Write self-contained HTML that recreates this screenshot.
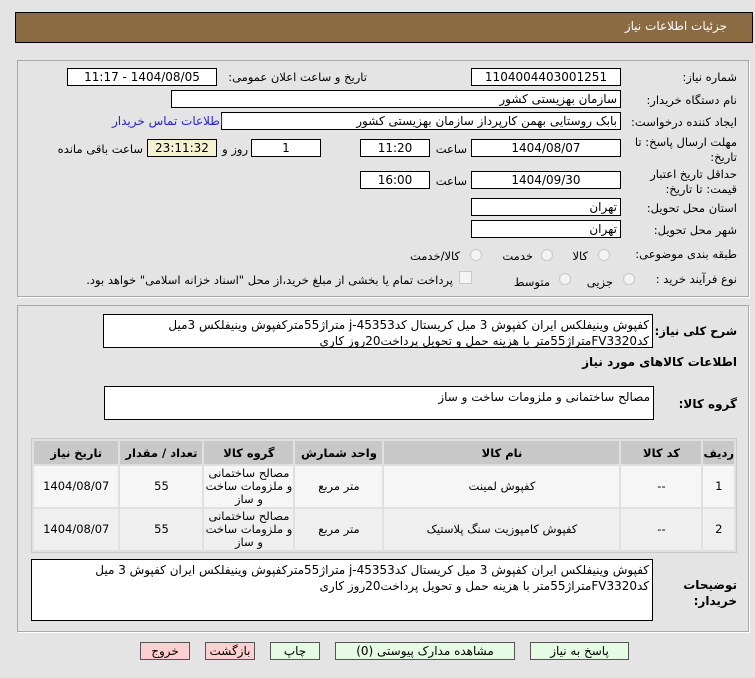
<!DOCTYPE html>
<html lang="fa" dir="rtl"><head><meta charset="utf-8">
<style>
*{box-sizing:border-box;margin:0;padding:0}
body{width:755px;height:678px;background:#e4e4e4;font-family:"DejaVu Sans","Noto Sans CJK SC",sans-serif;font-size:11.5px;color:#000;position:relative;overflow:hidden}
.a{position:absolute;white-space:nowrap}
.box{position:absolute;background:#fff;border:1px solid #000;height:18px;line-height:16px;font-size:12px}
.c{text-align:center}
.r{text-align:right;padding-right:3px}
.lab{position:absolute;white-space:nowrap;text-align:right}
.panel{position:absolute;border:1px solid #a8a8a8;border-right-color:#fff;border-bottom-color:#fff;box-shadow:inset -1px -1px 0 #a8a8a8}
.radio{position:absolute;width:12px;height:12px;border-radius:50%;border:1px solid #c8c8c8;background:#f4f4f4}
.ta{position:absolute;background:#fff;border:1px solid #000;font-size:12px;line-height:16px;padding:2px 3px;text-align:right}
table{position:absolute;border-collapse:separate;border-spacing:2px;background:#e0e0e0;border:1px solid #c8c8c8}
th{background:#c8c8c8;font-weight:bold;height:23px;font-size:11.5px}
td{text-align:center;font-size:11.5px;line-height:13px}
tr.o td{background:#f6f6f6}tr.e td{background:#efefef}
.btn{position:absolute;top:642px;height:18px;border:1px solid #555;font-size:12px;line-height:16px;text-align:center}
.g{background:#e6fbe3}.p{background:#fcd0d0}
</style></head><body>
<div class="a" style="left:15px;top:12px;width:738px;height:31px;background:#8b6b42;border:1px solid #000"></div>
<div class="a" style="right:28px;top:19px;color:#fff;font-size:12px">جزئیات اطلاعات نیاز</div>

<div class="panel" style="left:17px;top:60px;width:733px;height:238px"></div>
<div class="panel" style="left:17px;top:305px;width:733px;height:328px"></div>

<div class="lab" style="right:18px;top:70px">شماره نیاز:</div>
<div class="box c" style="left:471px;top:68px;width:150px">1104004403001251</div>
<div class="lab" style="right:388px;top:70px">تاریخ و ساعت اعلان عمومی:</div>
<div class="box c" style="left:67px;top:68px;width:150px">1404/08/05 - 11:17</div>

<div class="lab" style="right:18px;top:93px">نام دستگاه خریدار:</div>
<div class="box r" style="left:171px;top:90px;width:450px">سازمان بهزیستی کشور</div>

<div class="lab" style="right:18px;top:115px">ایجاد کننده درخواست:</div>
<div class="box r" style="left:221px;top:112px;width:400px">بابک  روستایی بهمن کارپرداز سازمان بهزیستی کشور</div>
<div class="a" style="left:112px;top:114px;color:#2323d8;font-size:12px">اطلاعات تماس خریدار</div>

<div class="lab" style="right:18px;top:135px;line-height:15px">مهلت ارسال پاسخ: تا<br>تاریخ:</div>
<div class="box c" style="left:471px;top:139px;width:150px">1404/08/07</div>
<div class="lab" style="right:288px;top:142px">ساعت</div>
<div class="box c" style="left:360px;top:139px;width:70px">11:20</div>
<div class="box c" style="left:251px;top:139px;width:70px">1</div>
<div class="lab" style="right:507px;top:142px">روز و</div>
<div class="box c" style="left:147px;top:139px;width:70px;background:#f5f2d4">23:11:32</div>
<div class="lab" style="right:612px;top:142px">ساعت باقی مانده</div>

<div class="lab" style="right:18px;top:167px;line-height:15px">حداقل تاریخ اعتبار<br>قیمت: تا تاریخ:</div>
<div class="box c" style="left:471px;top:171px;width:150px">1404/09/30</div>
<div class="lab" style="right:288px;top:174px">ساعت</div>
<div class="box c" style="left:360px;top:171px;width:70px">16:00</div>

<div class="lab" style="right:18px;top:201px">استان محل تحویل:</div>
<div class="box r" style="left:471px;top:198px;width:150px">تهران</div>
<div class="lab" style="right:18px;top:223px">شهر محل تحویل:</div>
<div class="box r" style="left:471px;top:220px;width:150px">تهران</div>

<div class="lab" style="right:18px;top:247px">طبقه بندی موضوعی:</div>
<div class="radio" style="left:598px;top:249px"></div><div class="lab" style="right:167px;top:249px">کالا</div>
<div class="radio" style="left:541px;top:249px"></div><div class="lab" style="right:222px;top:249px">خدمت</div>
<div class="radio" style="left:470px;top:249px"></div><div class="lab" style="right:295px;top:249px">کالا/خدمت</div>

<div class="lab" style="right:18px;top:272px">نوع فرآیند خرید :</div>
<div class="radio" style="left:623px;top:273px"></div><div class="lab" style="right:142px;top:275px">جزیی</div>
<div class="radio" style="left:559px;top:273px"></div><div class="lab" style="right:205px;top:275px">متوسط</div>
<div class="a" style="left:459px;top:271px;width:13px;height:13px;border:1px solid #c8c8c8;background:#f4f4f4"></div>
<div class="lab" style="right:302px;top:273px">پرداخت تمام یا بخشی از مبلغ خرید،از محل "اسناد خزانه اسلامی" خواهد بود.</div>

<div class="lab" style="right:18px;top:324px;font-weight:bold;font-size:11.5px">شرح کلی نیاز:</div>
<div class="ta" style="left:103px;top:314px;width:550px;height:34px">کفپوش وینیفلکس ایران کفپوش 3 میل کریستال کد45353-j  متراژ55مترکفپوش وینیفلکس 3میل کدFV3320متراژ55متر با هزینه حمل و تحویل پرداخت20روز کاری</div>
<div class="lab" style="right:18px;top:355px;font-weight:bold;font-size:12px">اطلاعات کالاهای مورد نیاز</div>

<div class="lab" style="right:18px;top:397px;font-weight:bold;font-size:12px">گروه کالا:</div>
<div class="ta" style="left:104px;top:386px;width:550px;height:34px">مصالح ساختمانی و ملزومات ساخت و ساز</div>

<table style="left:31px;top:438px;width:706px">
<tr><th style="width:27px">ردیف</th><th style="width:80px">کد کالا</th><th style="width:235px">نام کالا</th><th style="width:87px">واحد شمارش</th><th style="width:89px">گروه کالا</th><th style="width:82px">تعداد / مقدار</th><th>تاریخ نیاز</th></tr>
<tr class="o" style="height:41px"><td>1</td><td>--</td><td>کفپوش لمینت</td><td>متر مربع</td><td>مصالح ساختمانی و ملزومات ساخت و ساز</td><td>55</td><td>1404/08/07</td></tr>
<tr class="e" style="height:41px"><td>2</td><td>--</td><td>کفپوش کامپوزیت سنگ پلاستیک</td><td>متر مربع</td><td>مصالح ساختمانی و ملزومات ساخت و ساز</td><td>55</td><td>1404/08/07</td></tr>
</table>

<div class="lab" style="right:18px;top:577px;font-weight:bold;font-size:12px;line-height:16px">توضیحات<br>خریدار:</div>
<div class="ta" style="left:31px;top:559px;width:622px;height:62px">کفپوش وینیفلکس ایران کفپوش 3 میل کریستال کد45353-j  متراژ55مترکفپوش وینیفلکس ایران کفپوش 3 میل کدFV3320متراژ55متر با هزینه حمل و تحویل پرداخت20روز کاری</div>

<div class="btn g" style="left:530px;width:99px">پاسخ به نیاز</div>
<div class="btn g" style="left:335px;width:180px">مشاهده مدارک پیوستی (0)</div>
<div class="btn g" style="left:270px;width:50px">چاپ</div>
<div class="btn p" style="left:205px;width:50px">بازگشت</div>
<div class="btn p" style="left:140px;width:50px">خروج</div>
</body></html>
